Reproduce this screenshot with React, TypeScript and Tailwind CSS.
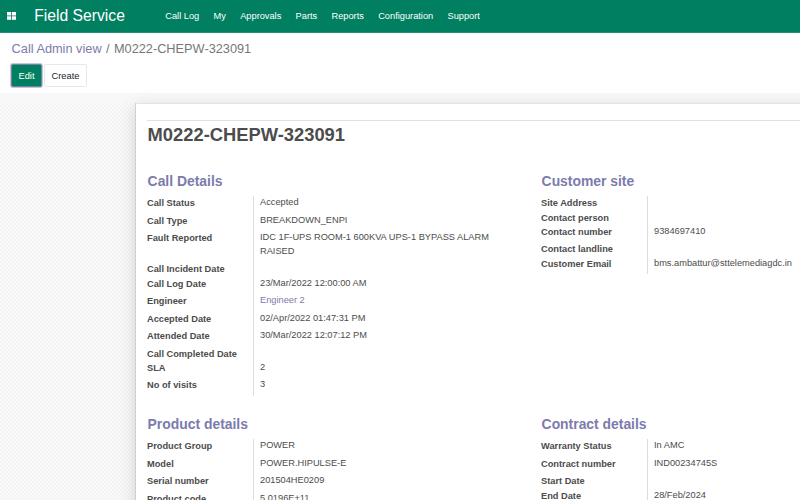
import React from 'react';

type Field = { label: string; value?: string; link?: boolean; tall?: boolean };

const callDetails: Field[] = [
  { label: 'Call Status', value: 'Accepted' },
  { label: 'Call Type', value: 'BREAKDOWN_ENPI' },
  { label: 'Fault Reported', value: 'IDC 1F-UPS ROOM-1 600KVA UPS-1 BYPASS ALARM RAISED', tall: true },
  { label: 'Call Incident Date' },
  { label: 'Call Log Date', value: '23/Mar/2022 12:00:00 AM' },
  { label: 'Engineer', value: 'Engineer 2', link: true },
  { label: 'Accepted Date', value: '02/Apr/2022 01:47:31 PM' },
  { label: 'Attended Date', value: '30/Mar/2022 12:07:12 PM' },
  { label: 'Call Completed Date' },
  { label: 'SLA', value: '2' },
  { label: 'No of visits', value: '3' },
];

const customerSite: Field[] = [
  { label: 'Site Address' },
  { label: 'Contact person' },
  { label: 'Contact number', value: '9384697410' },
  { label: 'Contact landline' },
  { label: 'Customer Email', value: 'bms.ambattur@sttelemediagdc.in' },
];

const productDetails: Field[] = [
  { label: 'Product Group', value: 'POWER' },
  { label: 'Model', value: 'POWER.HIPULSE-E' },
  { label: 'Serial number', value: '201504HE0209' },
  { label: 'Product code', value: '5.0196E+11' },
];

const contractDetails: Field[] = [
  { label: 'Warranty Status', value: 'In AMC' },
  { label: 'Contract number', value: 'IND00234745S' },
  { label: 'Start Date' },
  { label: 'End Date', value: '28/Feb/2024' },
];

const menu = ['Call Log', 'My', 'Approvals', 'Parts', 'Reports', 'Configuration', 'Support'];

function Group({ title, fields }: { title: string; fields: Field[] }) {
  return (
    <section className="w-[394px] shrink-0">
      <h2 className="h-[24px] pl-[0.6px] text-[13.9px] leading-[18px] font-bold whitespace-nowrap text-[#7c7bad]">
        {title}
      </h2>
      <dl>
        {fields.map((f) => (
          <div
            key={f.label}
            className={`flex text-[9.25px] leading-[14px] ${f.tall ? 'h-[31px]' : f.value ? 'h-[17.5px]' : 'h-[14.4px]'}`}
          >
            <dt className="w-[106px] shrink-0 pt-[0.2px] font-bold whitespace-nowrap text-[#4c4c4c]">{f.label}</dt>
            <dd
              className={`w-[248px] border-l border-[#dddddd] pl-[6px] leading-[13.6px] ${f.link ? 'text-[#7c7bad]' : 'text-[#4c4c4c]'}`}
            >
              <div className="pt-[0.2px]">{f.value}</div>
            </dd>
          </div>
        ))}
      </dl>
    </section>
  );
}

export default function App() {
  return (
    <div className="flex h-[500px] w-[800px] flex-col overflow-hidden bg-white font-['Liberation_Sans',Arial,sans-serif]">
      <nav className="flex h-[33px] shrink-0 items-center border-b border-[#228f70] bg-[#008060] text-white">
        <svg className="ml-[7px] h-[8px] w-[9px] shrink-0" viewBox="0 0 9 8" fill="white">
          <rect x="0" y="0" width="4.1" height="3.5" />
          <rect x="4.9" y="0" width="4.1" height="3.5" />
          <rect x="0" y="4.3" width="4.1" height="3.5" />
          <rect x="4.9" y="4.3" width="4.1" height="3.5" />
        </svg>
        <div className="ml-[18.2px] w-[131.1px] text-[15.7px] leading-[18px] whitespace-nowrap">Field Service</div>
        <div className="flex gap-[14.3px] text-[9.25px] leading-[14px] whitespace-nowrap">
          {menu.map((m) => (
            <span key={m}>{m}</span>
          ))}
        </div>
      </nav>

      <header className="h-[60px] shrink-0 pt-[8px] pl-[11px]">
        <div className="pl-[0.6px] text-[12.75px] leading-[16px] whitespace-nowrap text-[#777777]">
          <span className="text-[#7c7bad]">Call Admin view</span>
          <span className="px-[4.4px]">/</span>
          <span>M0222-CHEPW-323091</span>
        </div>
        <div className="mt-[7px] flex gap-[2px]">
          <button className="h-[23px] w-[31px] rounded-[2px] border border-[#6a86a0] bg-[#008060] text-[9.25px] leading-[20px] text-white shadow-[0_0_0_1px_#c5c4dc]">
            Edit
          </button>
          <button className="h-[23px] w-[43px] rounded-[2px] border border-[#e6e8ea] bg-white text-[9.25px] leading-[20px] text-[#212529]">
            Create
          </button>
        </div>
      </header>

      <main className="flex h-[407px] shrink-0 flex-col bg-[#f8f8f8]">
        <div className="h-[10px] shrink-0" />
        <div className="flex h-[397px] bg-[#f8f8f8] bg-[repeating-conic-gradient(#f3f3f3_0_25%,#fafafa_0_50%)] bg-size-[4px_4px] pl-[135px]">
          <article className="h-[420px] w-[830px] shrink-0 border border-[#c8d3d3] border-t-[#e4e4e4] bg-white pl-[11px] shadow-[0_4px_16px_rgba(0,0,0,0.15)]">
            <div className="mt-[16px] border-t border-[#dee2e6]" />
            <h1 className="h-[51px] pt-[3px] pl-[0.6px] text-[18.35px] leading-[22px] font-bold text-[#4c4c4c]">
              M0222-CHEPW-323091
            </h1>
            <div className="flex h-[243px]">
              <Group title="Call Details" fields={callDetails} />
              <Group title="Customer site" fields={customerSite} />
            </div>
            <div className="flex">
              <Group title="Product details" fields={productDetails} />
              <Group title="Contract details" fields={contractDetails} />
            </div>
          </article>
        </div>
      </main>
    </div>
  );
}
